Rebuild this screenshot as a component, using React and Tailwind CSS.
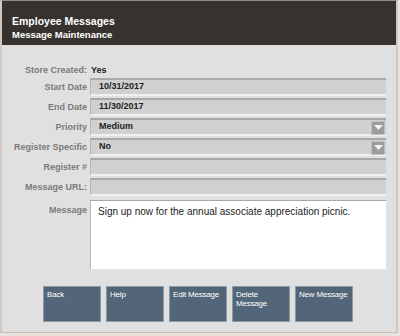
import { useState } from 'react';

const font = { fontFamily: '"Liberation Sans", Arial, sans-serif' };

function Field({ label, value, dropdown }) {
  return (
    <div className="flex items-center h-[20px]">
      <div className="w-[88px] pr-[3px] text-right text-[9px] font-bold text-[#7a7a7a] leading-none">
        {label}
      </div>
      <div className="relative flex-1 h-[18px] bg-[#d0d0d0] border-t-2 border-t-[#a8a8a8] border-b-2 border-b-[#f0f0f0] border-l border-l-[#b8b8b8] flex items-center pl-[8px] text-[9px] font-bold text-[#222]">
        {value}
        {dropdown && (
          <div className="absolute right-[1px] top-[1px] w-[14px] h-[14px] bg-[#9c9c9c] border border-[#c0c0c0] flex items-center justify-center">
            <svg width="9" height="6" viewBox="0 0 9 6">
              <polygon points="0,0 9,0 4.5,5" fill="#f4f4f4" />
            </svg>
          </div>
        )}
      </div>
    </div>
  );
}

export default function App() {
  const [message] = useState('Sign up now for the annual associate appreciation picnic.');
  const buttons = ['Back', 'Help', 'Edit Message', 'Delete Message', 'New Message'];

  return (
    <div className="w-[400px] h-[336px] bg-[#e8e2de] overflow-hidden" style={font}>
      <div className="h-[333px] border-t border-t-[#8c8c8c] border-l-2 border-l-[#d2c8c0] border-r-2 border-r-[#d2c8c0] border-b border-b-[#c8beb6] bg-[#e0e0e0] w-[398px] flex flex-col">
        {/* ── Header ── */}
        <div className="h-[44px] bg-[#36322e] px-[10px] pt-[15px] text-white font-bold leading-none">
          <div className="text-[10.5px]">Employee Messages</div>
          <div className="text-[9.5px] mt-[3px]">Message Maintenance</div>
        </div>

        {/* ── Form ── */}
        <div className="pr-[10px] pt-[18px] flex flex-col">
          <div className="flex items-center h-[14px]">
            <div className="w-[88px] pr-[3px] text-right text-[9px] font-bold text-[#7a7a7a] leading-none">
              Store Created:
            </div>
            <div className="text-[9px] font-bold text-[#222] pl-[1px] leading-none">Yes</div>
          </div>
          <Field label="Start Date" value="10/31/2017" />
          <Field label="End Date" value="11/30/2017" />
          <Field label="Priority" value="Medium" dropdown />
          <Field label="Register Specific" value="No" dropdown />
          <Field label="Register #" value="" />
          <Field label="Message URL:" value="" />
          <div className="flex mt-[3px]">
            <div className="w-[88px] pr-[3px] pt-[6px] text-right text-[9px] font-bold text-[#7a7a7a] leading-none">
              Message
            </div>
            <div className="flex-1 h-[69px] bg-white border-t border-t-[#a8a8a8] border-l border-l-[#b8b8b8] pl-[7px] pt-[6px] text-[10px] text-[#222] leading-none">
              {message}
            </div>
          </div>
        </div>

        {/* ── Buttons ── */}
        <div className="flex justify-center gap-[5px] mt-[17px] ml-[-2px]">
          {buttons.map((b) => (
            <button
              key={b}
              className="w-[58px] h-[36px] bg-[#536579] border border-[#8e9aa6] text-white text-[8px] tracking-[-0.2px] text-left leading-[9px] px-[3px] pt-[3px] flex items-start"
            >
              {b}
            </button>
          ))}
        </div>
      </div>
    </div>
  );
}
